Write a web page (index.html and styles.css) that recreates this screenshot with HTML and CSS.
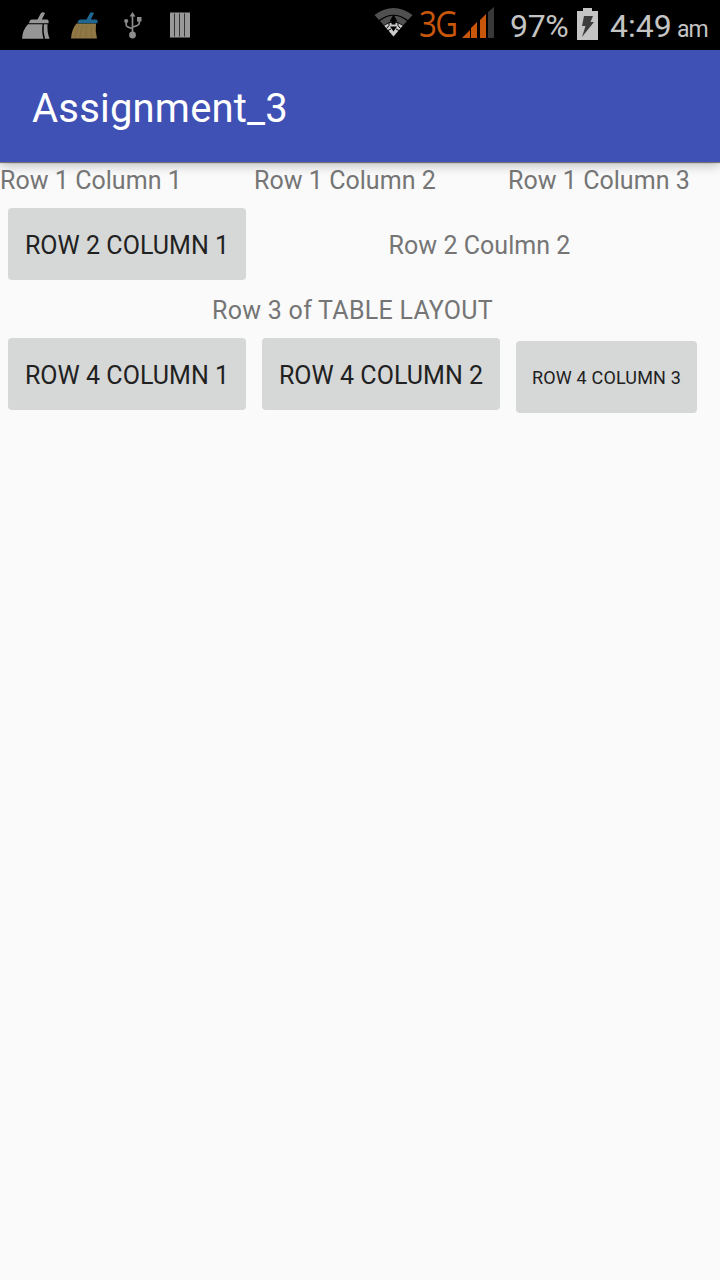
FILE: index.html
```html
<!DOCTYPE html>
<html lang="en">
<head>
<meta charset="utf-8">
<title>Assignment_3</title>
<link rel="stylesheet" href="styles.css">
</head>
<body>
<header class="status">
  <div class="notices">
    <svg width="30" height="30" viewBox="0 0 30 30" fill="#969696">
      <path d="M16.500 7.500l3.500-6.500q2-1.800 4 .3L20.800 7.500h5.700q1.500.5 1 3.700H8q.5-3.500 3-3.700z"/>
      <path d="M7 12.200h14.500q-1 8 1 14.500H1q.5-9 6-14.500z"/>
      <path d="M22.800 12.200h3.700q-.5 8 2 14.500H24q-2-7-1.200-14.500z"/>
    </svg>
    <svg width="30" height="30" viewBox="0 0 30 30">
      <path fill="#8f7845" d="M6.500 11.500H26q-1 7 1 15H1q.5-9 5.500-15z"/>
      <path fill="none" stroke="#7d683a" stroke-width=".6" d="M9 13Q6 20 5 26M13 13q-3 6-3 13M17 13q-2 7-1 13M22 13q-2 7 0 13"/>
      <path fill="#1f6690" d="M16.500 7.500l3.500-6.500q2-1.800 4 .3L20.800 7.500h5.700q1.500.5 1 3.700H7.500q.5-3.500 3-3.700z"/>
    </svg>
    <svg class="usb" width="20" height="28" viewBox="0 0 20 28">
      <g fill="none" stroke="#8c8c8c" stroke-width="1.700"><path d="M9.500 3v20M3.200 9v4q0 2 6.300 3.500M16.300 7v4q0 2.500-6.800 4"/></g>
      <g fill="#8c8c8c"><path d="M9.500 0l3 4.500h-6z"/><circle cx="3.200" cy="9" r="2.100"/><path d="M14 5h4.500v4.500H14z"/><circle cx="9.500" cy="23" r="3.400"/></g>
    </svg>
    <svg width="20" height="26" viewBox="0 0 20 26">
      <path fill="#999" d="M0 .5h20v25H0z"/><path d="M4.500 1.500v23M9.500 1.500v23M14.500 1.500v23" stroke="#333" stroke-width="1"/>
    </svg>
  </div>
  <div class="system">
    <svg class="wifi" width="40" height="30" viewBox="0 0 40 30">
      <path fill="#505050" d="M.5 7Q19.500-7 38.500 7L34 12Q19.500 1.500 5 12z"/>
      <path fill="#505050" d="M6 13Q19.500 2.500 33 13L29.200 17.200Q19.500 10 9.800 17.200z"/>
      <path fill="#ccc" d="M10.200 17.800Q19.500 11 28.800 17.800L19.500 28.500z"/>
      <path d="M19.500 6.500l4 7h-2v3h-4v-3h-2zM19.500 23.500l-3.500-5h7z"/>
      <path fill="none" stroke="#000" stroke-width="1" d="M15 14.500v3l-2.500 3M24 14.500v3l2.500 3M14 22.500l3-1.500M25 22.500l-3-1.500"/>
    </svg>
    <span class="net"><span class="narrow">3G</span></span>
    <svg class="signal" width="33" height="32" viewBox="0 0 33 32">
      <path fill="#c8560b" d="M0 31l8-8v8zM9 31V21l6-6v16zM18 31V13l6-6v24z"/>
      <path fill="#383838" d="M26 31V5l6-5v31z"/>
    </svg>
    <span class="percent">97%</span>
    <svg class="battery" width="21" height="32" viewBox="0 0 21 32">
      <path fill="#c4c4c4" d="M0 3h6V0h9v3h6v29H0z"/>
      <path fill="#3c3c3c" d="M7 8h9l-2.500 6H17L5 29l3.500-11H5z"/>
    </svg>
    <span class="clock">4:49</span><span class="ampm">am</span>
  </div>
</header>
<div class="appbar"><h1>Assignment_3</h1></div>
<main class="table">
  <span class="label">Row 1 Column 1</span>
  <span class="label">Row 1 Column 2</span>
  <span class="label">Row 1 Column 3</span>
  <button class="btn">ROW 2 COLUMN 1</button>
  <span class="label span2">Row 2 Coulmn 2</span>
  <span class="label span3">Row 3 of TABLE LAYOUT</span>
  <button class="btn">ROW 4 COLUMN 1</button>
  <button class="btn">ROW 4 COLUMN 2</button>
  <button class="btn small">ROW 4 COLUMN 3</button>
</main>
</body>
</html>
```
FILE: styles.css
```css
* { box-sizing: border-box; }
body {
  margin: 0;
  min-height: 1280px;
  background: #fafafa;
  font-family: Roboto, sans-serif;
}
svg { display: block; flex: none; }
.status {
  display: flex;
  justify-content: space-between;
  height: 50px;
  background: #000;
  color: #c4c4c4;
}
.notices { display: flex; align-items: flex-start; padding: 12px 0 0 21px; }
.notices svg + svg { margin-left: 19px; }
.notices .usb + svg { margin-left: 27px; }
.notices svg + .usb { margin-left: 23px; }
.system { display: flex; align-items: flex-start; width: 346px; white-space: nowrap; }
.wifi { margin-top: 8px; }
.net { width: 48px; padding-left: 5px; color: #c8560b; font: 36px/48px "Open Sans", sans-serif; letter-spacing: -2px; }
.narrow { display: inline-block; transform: scaleX(.87); transform-origin: left; }
.signal { margin-top: 7px; }
.percent { width: 82px; padding-left: 15px; font-size: 32px; line-height: 52px; letter-spacing: -.3px; }
.battery { margin-top: 8px; }
.clock { width: 79px; padding-left: 12px; font-size: 32px; line-height: 52px; }
.ampm { font-size: 23px; line-height: 59px; letter-spacing: -1px; }
.appbar {
  height: 112px;
  padding-left: 32px;
  background: #3f51b5;
  box-shadow: 0 1px 1px rgba(0, 0, 0, .45), 0 4px 10px rgba(0, 0, 0, .22);
}
h1 { margin: 0; color: #fff; font-size: 40px; font-weight: 400; line-height: 117px; letter-spacing: .2px; }
.table {
  display: grid;
  grid-template-columns: 254px 254px 197px;
  grid-template-rows: 34px 96px 34px 99px;
  width: 705px;
}
.label { color: #757575; font-size: 25px; line-height: 38px; white-space: nowrap; letter-spacing: .04px; }
.span2 { grid-column: span 2; text-align: center; line-height: 100px; }
.span3 { grid-column: span 3; text-align: center; letter-spacing: .27px; }
.btn {
  height: 72px;
  margin: 12px 8px;
  padding: 3px 0 0;
  border: 0;
  border-radius: 4px;
  background: #d6d7d7;
  color: #212121;
  font: 25px/30px Roboto, sans-serif;
  letter-spacing: .04px;
  white-space: nowrap;
}
.small { margin-top: 15px; padding-top: 2px; font-size: 18px; letter-spacing: .17px; }
```
